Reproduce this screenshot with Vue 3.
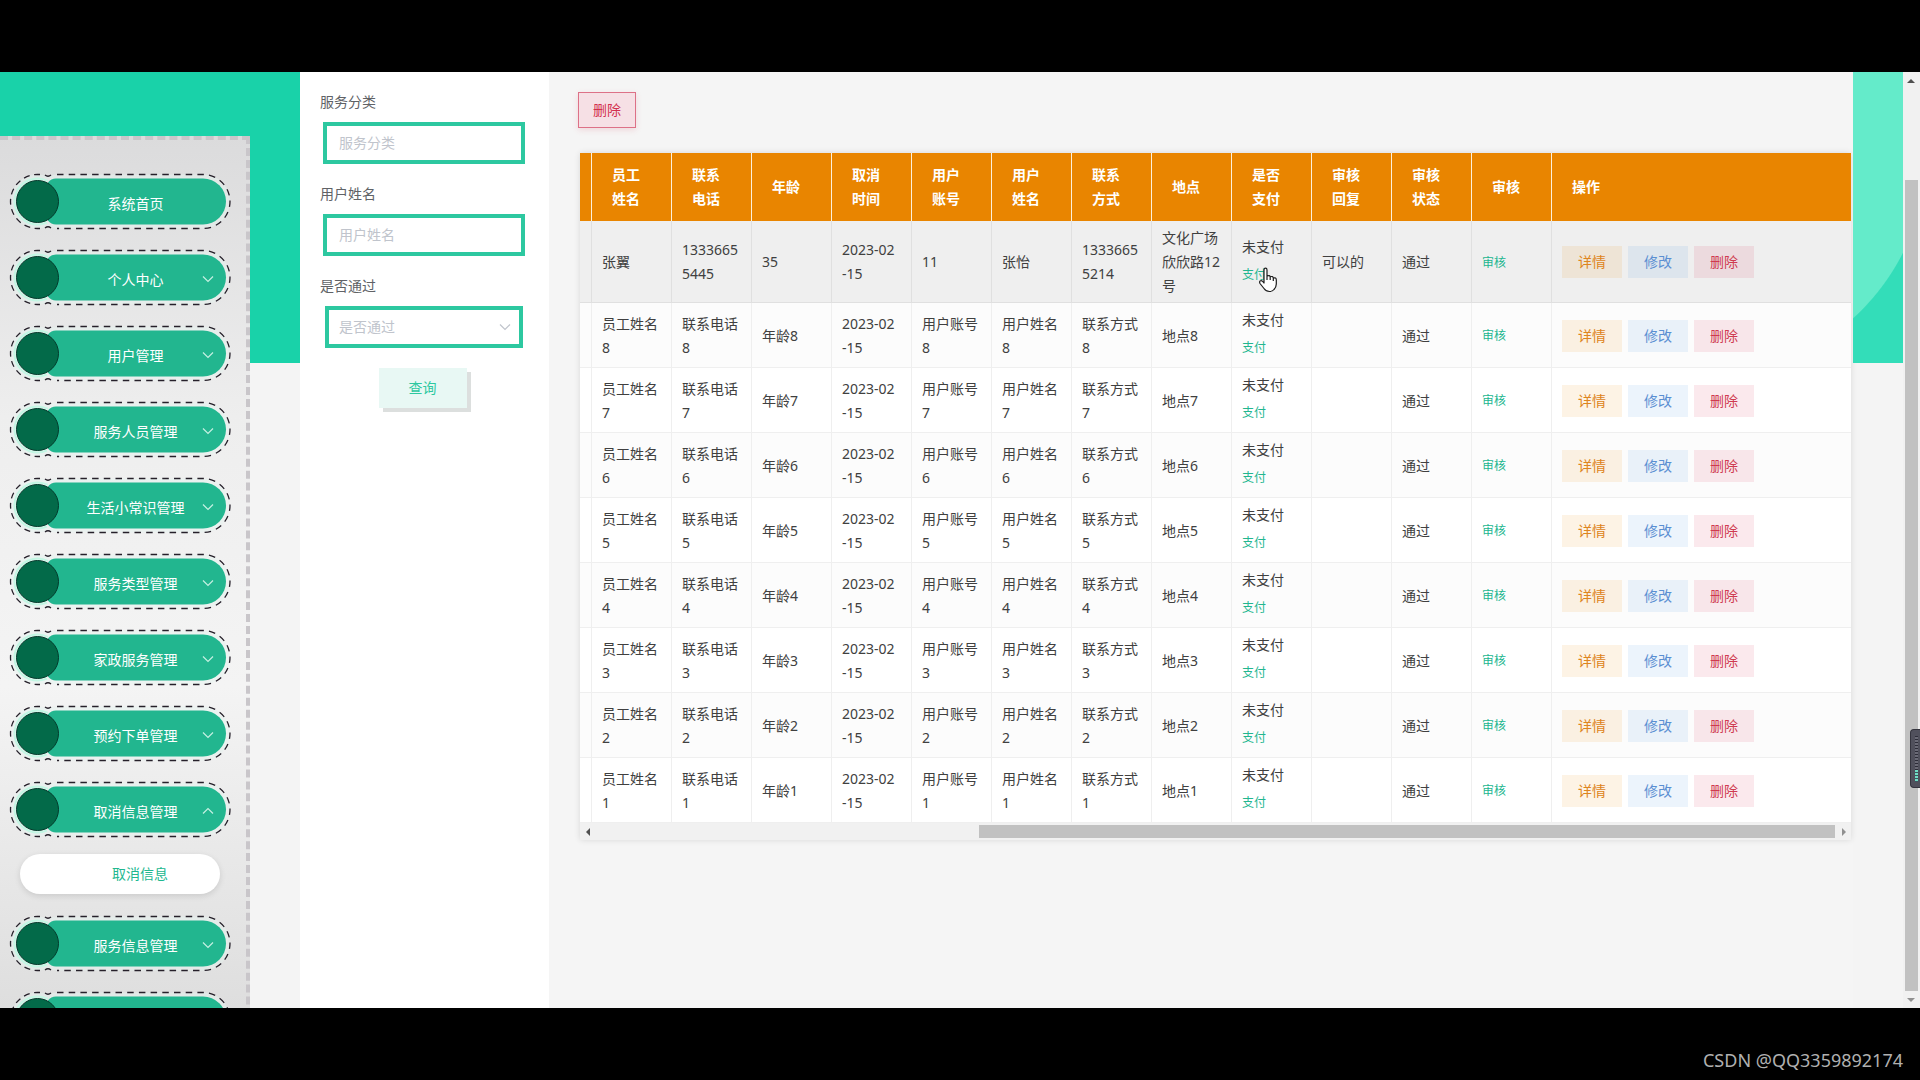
<script setup>
import { ref } from 'vue'

const menu = [
  { label: '系统首页' },
  { label: '个人中心', arrow: 'down' },
  { label: '用户管理', arrow: 'down' },
  { label: '服务人员管理', arrow: 'down' },
  { label: '生活小常识管理', arrow: 'down' },
  { label: '服务类型管理', arrow: 'down' },
  { label: '家政服务管理', arrow: 'down' },
  { label: '预约下单管理', arrow: 'down' },
  { label: '取消信息管理', arrow: 'up', children: ['取消信息'] },
  { label: '服务信息管理', arrow: 'down' },
  { label: '' },
]

const columns = ['员工\n姓名', '联系\n电话', '年龄', '取消\n时间', '用户\n账号', '用户\n姓名', '联系\n方式', '地点']

const rows = [
  { cells: ['张翼', '1333665\n5445', '35', '2023-02\n-15', '11', '张怡', '1333665\n5214', '文化广场\n欣欣路12\n号'], reply: '可以的', hover: true },
  ...[8, 7, 6, 5, 4, 3, 2, 1].map((n) => ({
    cells: [`员工姓名\n${n}`, `联系电话\n${n}`, `年龄${n}`, '2023-02\n-15', `用户账号\n${n}`, `用户姓名\n${n}`, `联系方式\n${n}`, `地点${n}`],
    reply: '',
    striped: n % 2 === 0,
  })),
]

const category = ref('')
const userName = ref('')
const passed = ref('')
</script>

<template>
  <div class="screen">
    <div class="letterbox"></div>
    <div class="stage">
      <aside class="sidebar">
        <nav class="menu">
          <template v-for="item in menu" :key="item.label">
            <button class="menu-item" type="button">
              <svg class="menu-shape" viewBox="0 0 221 55" aria-hidden="true">
                <path d="M38 2.500 Q42 .5 47 .5 H193 A27 27 0 0 1 193 54.500 H47 Q42 54.500 38 52.500 Q33 54.500 27.500 54.500 A27 27 0 0 1 27.500 .5 Q33 .5 38 2.500Z" fill="#e6f4f0" fill-opacity=".5" />
                <path d="M47 .5 H193 A27 27 0 0 1 193 54.500 H47" fill="none" stroke="#26202a" stroke-width="1.300" stroke-dasharray="6.500 5.200" />
                <path d="M30 .5 H27.500 A27 27 0 0 0 27.500 54.500 H30" fill="none" stroke="#26202a" stroke-width="1.300" stroke-dasharray="6 4.500" />
                <path d="M35 1 Q38 3.500 41 1 M35 54 Q38 51.500 41 54" fill="none" stroke="#26202a" stroke-width="1.300" />
                <path d="M38 8.500 Q41 4.500 46 4.500 H193 A23 23 0 0 1 193 50.500 H46 Q41 50.500 38 46.500Z" fill="#22b68f" />
                <circle cx="27.500" cy="27.500" r="23" fill="none" stroke="#c3f7e4" stroke-width="2" stroke-dasharray="92 53" transform="rotate(66 27.500 27.500)" />
                <circle cx="27.500" cy="27.500" r="21" fill="#036a49" stroke="#033a2b" stroke-width="1" />
              </svg>
              <span class="menu-label">{{ item.label }}</span>
              <svg v-if="item.arrow" class="menu-arrow" :class="item.arrow" viewBox="0 0 12 8" aria-hidden="true">
                <path d="M1 1.500 6 6.500 11 1.500" fill="none" stroke="#c5f0e2" stroke-width="1.200" />
              </svg>
            </button>
            <a v-for="child in item.children" :key="child" class="submenu-item" href="#">{{ child }}</a>
          </template>
        </nav>
      </aside>

      <form class="filters" @submit.prevent>
        <label class="filter-label" for="category">服务分类</label>
        <input id="category" v-model="category" class="filter-input" type="text" placeholder="服务分类" />
        <label class="filter-label" for="user-name">用户姓名</label>
        <input id="user-name" v-model="userName" class="filter-input" type="text" placeholder="用户姓名" />
        <label class="filter-label" for="passed">是否通过</label>
        <div class="select-wrap">
          <select id="passed" v-model="passed" class="filter-select">
            <option value="">是否通过</option>
            <option value="yes">通过</option>
            <option value="no">未通过</option>
          </select>
          <svg class="select-arrow" viewBox="0 0 12 8" aria-hidden="true">
            <path d="M1 1.500 6 6.500 11 1.500" fill="none" stroke="#c0c4cc" stroke-width="1.200" />
          </svg>
        </div>
        <button class="query" type="submit">查询</button>
      </form>

      <main class="content">
        <button class="bulk-delete" type="button">删除</button>
        <div class="table-card">
          <table>
            <colgroup>
              <col class="col-stub" />
              <col v-for="n in 12" :key="n" class="col-data" />
              <col />
            </colgroup>
            <thead>
              <tr>
                <th></th>
                <th v-for="name in columns" :key="name">{{ name }}</th>
                <th>是否<br />支付</th>
                <th>审核<br />回复</th>
                <th>审核<br />状态</th>
                <th>审核</th>
                <th>操作</th>
              </tr>
            </thead>
            <tbody>
              <tr v-for="(row, i) in rows" :key="i" :class="{ hover: row.hover, striped: row.striped }">
                <td></td>
                <td v-for="(cell, j) in row.cells" :key="j">{{ cell }}</td>
                <td>
                  <div class="pay">
                    <span>未支付</span>
                    <button class="text-button" type="button">支付</button>
                    <svg v-if="row.hover" class="pointer" viewBox="0 0 20 26" aria-hidden="true">
                      <path d="M6 14.500V3Q6 1.200 7.500 1.200T9 3V9Q11.800 7.800 12.200 9.800 15 8.800 15.300 11 18.300 10.200 18.300 13V17Q18.300 20 16 22.500 14.500 24.500 11.500 24.500 8 24.500 6 21.500L2 16.500Q1 14.500 2.500 13.800 4 13 6 16Z M9 9V13 M12.200 9.800V13 M15.300 11V14" fill="#fff" stroke="#1c1c1c" stroke-width="1.200" stroke-linejoin="round" />
                    </svg>
                  </div>
                </td>
                <td>{{ row.reply }}</td>
                <td>通过</td>
                <td><button class="text-button" type="button">审核</button></td>
                <td>
                  <div class="actions">
                    <button class="action detail" type="button">详情</button>
                    <button class="action edit" type="button">修改</button>
                    <button class="action remove" type="button">删除</button>
                  </div>
                </td>
              </tr>
            </tbody>
          </table>
          <div class="h-scroll" aria-hidden="true">
            <svg class="h-arrow" viewBox="0 0 16 16"><path d="M10 4v8L6 8z" fill="#505050" /></svg>
            <div class="h-space"></div>
            <div class="h-thumb"></div>
            <svg class="h-arrow" viewBox="0 0 16 16"><path d="M7 4v8l4-4z" fill="#909090" /></svg>
          </div>
        </div>
      </main>

      <div class="banner-edge"></div>

      <div class="v-scroll" aria-hidden="true">
        <svg class="v-arrow" viewBox="0 0 17 17"><path d="M4 11h8L8 7z" fill="#505050" /></svg>
        <div class="v-space"></div>
        <div class="v-thumb"></div>
        <svg class="v-arrow" viewBox="0 0 17 17"><path d="M4 7h8l-4 4z" fill="#909090" /></svg>
        <div class="meter"><div class="meter-bars"></div><div class="meter-level"></div></div>
      </div>
    </div>
    <footer class="letterbox watermark">CSDN @QQ3359892174</footer>
  </div>
</template>

<style>
body {
  margin: 0;
  background: #000;
}
</style>

<style scoped>
* {
  box-sizing: border-box;
}

.screen {
  display: flex;
  flex-direction: column;
  height: 100vh;
  font: 14px/24px 'Noto Sans', 'Noto Sans CJK SC', sans-serif;
  color: #404040;
}

button,
input,
select {
  font: inherit;
}

button {
  margin: 0;
  padding: 0;
  border: 0;
  background: none;
  cursor: pointer;
}

.letterbox {
  flex: 0 0 72px;
  background: #000;
}

.watermark {
  padding: 40px 17px 0 0;
  text-align: right;
  font-size: 18px;
  line-height: 24px;
  color: #b0b0b0;
}

.stage {
  flex: 1;
  display: flex;
  min-height: 0;
  overflow: hidden;
  background: #f4f4f4;
}

/* Sidebar */
.sidebar {
  flex: 0 0 300px;
  padding-top: 64px;
  background: linear-gradient(#19d2a9, #19d2a9) no-repeat 0 0 / 100% 291px;
}

.menu {
  display: flex;
  flex-direction: column;
  gap: 21px;
  width: 250px;
  min-height: 1000px;
  padding: 34px 0 0 10px;
  border-top: 4px dashed #c9c6ca;
  border-right: 4px dashed #c9c6ca;
  background: linear-gradient(#dbdbdc, #eeeeee 28%, #f4f4f4 55%, #dcdcdc 90%) border-box;
}

.menu-item {
  position: relative;
  display: flex;
  flex: none;
  align-items: center;
  width: 221px;
  height: 55px;
  padding: 4px 0 0 30px;
  color: #fff;
}

.menu-shape {
  position: absolute;
  inset: 0;
  width: 221px;
  height: 55px;
  overflow: visible;
}

.menu-label {
  position: relative;
  flex: 1;
  text-align: center;
}

.menu-arrow {
  position: absolute;
  top: 25px;
  right: 17px;
  width: 12px;
  height: 8px;
}

.menu-arrow.up {
  transform: rotate(180deg);
}

.submenu-item {
  flex: none;
  width: 200px;
  height: 40px;
  margin: -4px 0 1px 10px;
  padding-left: 40px;
  border-radius: 20px;
  background: #fff;
  box-shadow: 0 2px 6px rgba(0, 0, 0, 0.12);
  line-height: 40px;
  text-align: center;
  text-decoration: none;
  color: #21b78f;
}

/* Filters */
.filters {
  flex: 0 0 249px;
  display: flex;
  flex-direction: column;
  min-width: 0;
  padding: 18px 24px 0 20px;
  background: #fff;
}

.filter-label {
  margin-bottom: 8px;
  color: #606266;
}

.filter-input,
.filter-select {
  min-width: 0;
  height: 42px;
  border: 4px solid #2dc8a0;
  border-radius: 0;
  background: #fff;
  outline: 0;
}

.filter-input {
  margin: 0 0 18px 3px;
  padding: 0 12px 2px;
}

.filter-input::placeholder {
  color: #c0c4cc;
  opacity: 1;
}

.select-wrap {
  position: relative;
  margin: 0 2px 20px 5px;
}

.filter-select {
  display: block;
  width: 100%;
  padding: 0 10px;
  appearance: none;
  color: #c0c4cc;
}

.select-arrow {
  position: absolute;
  top: 17px;
  right: 12px;
  width: 12px;
  height: 8px;
  pointer-events: none;
}

.query {
  align-self: center;
  width: 88px;
  height: 40px;
  background: #e8f8f4;
  box-shadow: 4px 4px 0 #dcdfde;
  color: #2dc8a0;
}

/* Content */
.content {
  flex: 1;
  min-width: 0;
  padding: 20px 2px 0 29px;
  background: #f5f5f5;
}

.bulk-delete {
  display: block;
  width: 58px;
  height: 36px;
  border: 1px solid #dd7187;
  background: #f6e0e5;
  box-shadow: 0 2px 6px rgba(220, 60, 90, 0.16);
  color: #d3304f;
}

.table-card {
  margin: 25px 0 0 2px;
  background: #fff;
  box-shadow: 0 0 6px rgba(0, 0, 0, 0.12);
}

table {
  width: 100%;
  table-layout: fixed;
  border-collapse: separate;
  border-spacing: 0;
}

.col-stub {
  width: 12px;
}

.col-data {
  width: 80px;
}

th {
  height: 68px;
  padding: 0 0 0 20px;
  border-right: 1px solid #fdf0dc;
  background: #e98500;
  text-align: left;
  white-space: pre-line;
  color: #fff;
}

th:last-child {
  border-right: 0;
}

th:first-child,
td:first-child {
  padding: 0;
}

td {
  height: 65px;
  padding: 5px 0 4px 10px;
  border-right: 1px solid #efefef;
  border-bottom: 1px solid #efefef;
  white-space: pre-line;
}

td:last-child {
  border-right: 0;
}

.striped td {
  background: #fcfcfc;
}

.hover td {
  border-color: #e0e0e0;
  background: #efefef;
}

.pay {
  position: relative;
  display: flex;
  flex-direction: column;
  align-items: flex-start;
  gap: 4px;
  padding-bottom: 3px;
}

.text-button {
  font-size: 12px;
  color: #22b68f;
}

.pay .text-button {
  height: 24px;
}

.pointer {
  position: absolute;
  top: 32px;
  left: 16px;
  width: 20px;
  height: 26px;
}

.actions {
  display: flex;
  gap: 6px;
}

.action {
  width: 60px;
  height: 32px;
}

.detail {
  background: rgba(233, 133, 0, 0.1);
  color: #de8420;
}

.edit {
  background: rgba(64, 148, 230, 0.1);
  color: #5b8fd2;
}

.remove {
  background: rgba(220, 40, 80, 0.1);
  color: #cf3a50;
}

.h-scroll {
  display: flex;
  align-items: center;
  height: 17px;
  background: #f1f1f1;
}

.h-arrow {
  flex: none;
  width: 16px;
  height: 16px;
}

.h-space {
  flex: 383;
}

.h-thumb {
  flex: 856;
  height: 13px;
  background: #c1c1c1;
}

/* Right edge */
.banner-edge {
  flex: 0 0 50px;
  height: 291px;
  background: radial-gradient(circle at -153px 78px, #64ebca 227px, #33ddb9 228px);
}

.v-scroll {
  position: relative;
  flex: 0 0 17px;
  display: flex;
  flex-direction: column;
  align-items: center;
  background: #f1f1f1;
}

.v-arrow {
  flex: none;
  width: 17px;
  height: 17px;
}

.v-space {
  flex: 91;
}

.v-thumb {
  flex: 811;
  width: 13px;
  background: #c1c1c1;
}

.meter {
  position: absolute;
  top: 657px;
  right: 0;
  width: 10px;
  height: 59px;
  padding: 6px 2px 0 4px;
  border: 1px solid #34343e;
  border-right: 0;
  border-radius: 4px 0 0 4px;
  background: #50505c;
}

.meter-bars {
  height: 34px;
  background: repeating-linear-gradient(#2c2c38 0 1px, #6a6a76 1px 3px);
}

.meter-level {
  height: 12px;
  background: repeating-linear-gradient(#6fdcc4 0 2px, #3c5660 2px 3px);
}
</style>
